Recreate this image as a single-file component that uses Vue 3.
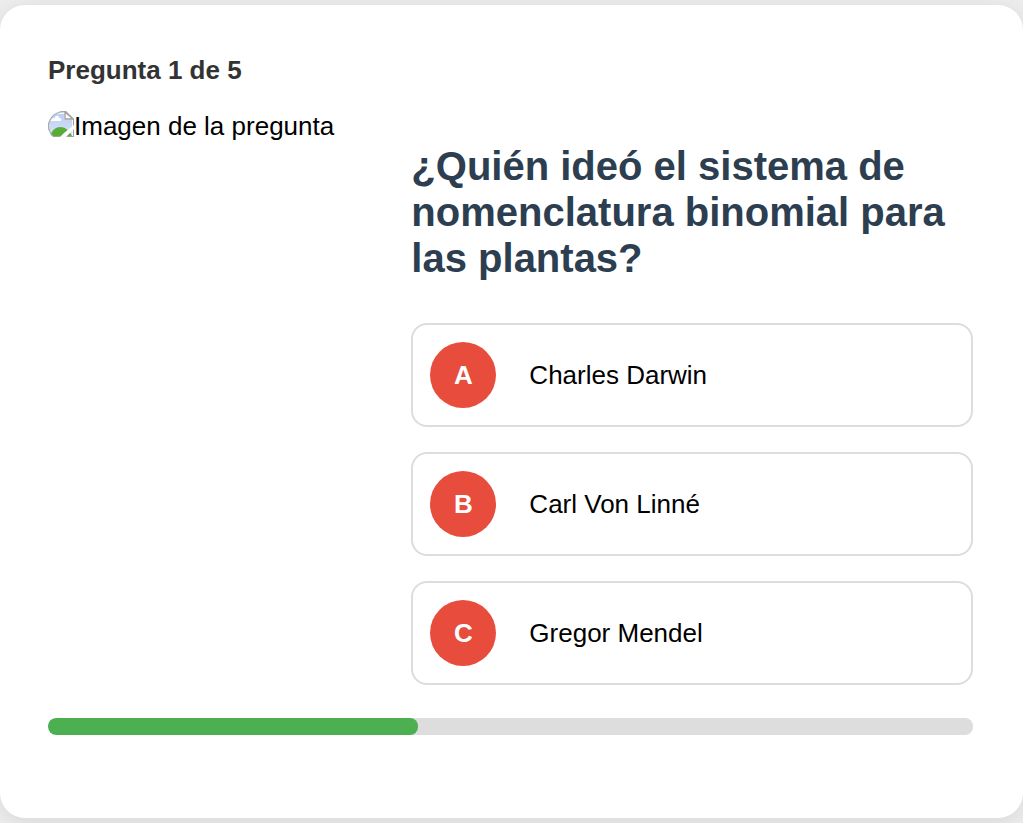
<script setup>
import { ref } from 'vue'

const current = 1
const total = 5
const progress = 40
const options = [
  { letter: 'A', text: 'Charles Darwin' },
  { letter: 'B', text: 'Carl Von Linné' },
  { letter: 'C', text: 'Gregor Mendel' },
]
const selected = ref(null)
</script>

<template>
  <main class="card">
    <p class="counter">Pregunta {{ current }} de {{ total }}</p>
    <div class="question">
      <div class="picture">
        <svg class="broken" viewBox="0 0 26 26" aria-hidden="true">
          <defs>
            <linearGradient id="sky" x1="0" y1="0" x2="0" y2="1">
              <stop offset="0" stop-color="#bdd0f2" />
              <stop offset="1" stop-color="#d3e2fa" />
            </linearGradient>
            <clipPath id="rounded">
              <path d="M16 0H26V26H5C2 23 0 20 0 15C0 7 7 0 16 0Z" />
            </clipPath>
          </defs>
          <g clip-path="url(#rounded)">
            <path d="M0 0H18L26 8V26H0Z" fill="#a0a0a0" />
            <path d="M1 1H17V8H25V25H1Z" fill="#f4f8ff" />
            <path d="M2 3H16V9H24V24H2Z" fill="url(#sky)" />
            <path d="M3 9C4 7 5 7 7 7C7 4 11 4 11 7C13 7 14 9 13 10H3Z" fill="#fff" />
            <path d="M2 25C4 19 8 16 12 16C17 16 21 19 24 25Z" fill="#57ad36" />
            <path d="M17 1L25 8H17Z" fill="#fff" stroke="#a0a0a0" stroke-width="1.4" />
            <path d="M12 26L16 22L26 14V18L18 26Z" fill="#fff" />
          </g>
          <path d="M16 0.8C7 0.8 0.8 7 0.8 15C0.8 19 2 22 5 25" fill="none" stroke="#a8a8a8" stroke-width="1" />
        </svg>
        <span>Imagen de la pregunta</span>
      </div>
      <div class="content">
        <h2>¿Quién ideó el sistema de nomenclatura binomial para las plantas?</h2>
        <div class="options">
          <button
            v-for="o in options"
            :key="o.letter"
            type="button"
            class="option"
            :aria-pressed="selected === o.letter"
            @click="selected = o.letter"
          >
            <span class="letter">{{ o.letter }}</span>
            <span>{{ o.text }}</span>
          </button>
        </div>
      </div>
    </div>
    <div class="track" role="progressbar" aria-label="Progreso" :aria-valuenow="progress" aria-valuemin="0" aria-valuemax="100">
      <div class="fill" :style="{ width: progress + '%' }"></div>
    </div>
  </main>
</template>

<style>
body {
  margin: 0;
  background: #eee;
}
</style>

<style scoped>
.card {
  box-sizing: border-box;
  min-height: calc(100vh - 10px);
  margin: 5px 0;
  padding: 50px 50px 50px 48px;
  border-radius: 25px;
  background: #fff;
  box-shadow: 0 4px 24px rgba(0, 0, 0, 0.1);
  font-family: "Liberation Sans", Arial, sans-serif;
  font-size: 26px;
  line-height: 30px;
  color: #000;
  display: flow-root;
}
.counter {
  margin: 0 0 25px;
  font-weight: bold;
  color: #333;
}
.question {
  display: grid;
  grid-template-columns: 1fr 1.7fr;
  column-gap: 33px;
}
.picture {
  display: flex;
  align-items: flex-start;
  white-space: nowrap;
}
.picture span {
  padding-top: 1px;
}
.broken {
  flex: none;
  width: 26px;
  height: 26px;
  margin-top: 1px;
}
h2 {
  margin: 33px 0 42px;
  font-size: 40px;
  line-height: 46px;
  color: #2c3e50;
}
.options {
  display: grid;
  gap: 25px;
}
.option {
  display: flex;
  align-items: center;
  gap: 33px;
  padding: 17px;
  border: 2px solid #ddd;
  border-radius: 16px;
  background: #fff;
  font: inherit;
  color: #000;
  text-align: left;
  cursor: pointer;
}
.letter {
  flex: none;
  display: flex;
  align-items: center;
  justify-content: center;
  width: 66px;
  height: 66px;
  border-radius: 50%;
  background: #e74c3c;
  font-weight: bold;
  color: #fff;
}
.track {
  height: 17px;
  margin-top: 33px;
  border-radius: 8px;
  background: #ddd;
  overflow: hidden;
}
.fill {
  height: 100%;
  border-radius: 8px;
  background: #4caf50;
}
</style>
